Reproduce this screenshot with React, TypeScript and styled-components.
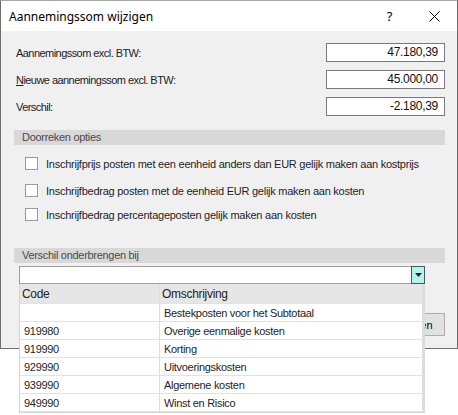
import React from "react";
import styled, { createGlobalStyle } from "styled-components";

const GlobalStyle = createGlobalStyle`
  html, body {
    margin: 0;
    padding: 0;
    background: #ffffff;
  }
  body {
    width: 458px;
    height: 415px;
    overflow: hidden;
  }
`;

const Page = styled.div`
  position: relative;
  width: 458px;
  height: 415px;
  background: #ffffff;
`;

const Window = styled.div`
  width: 458px;
  box-sizing: border-box;
  border: 1px solid #6e6e6e;
  border-top-color: #a8a8a8;
  display: flex;
  flex-direction: column;
  font-family: "Liberation Sans", Arial, sans-serif;
  font-size: 11px;
  color: #1e1e1e;
`;

const TitleBar = styled.div`
  height: 30px;
  background: #ffffff;
  display: flex;
  align-items: center;
`;

const Title = styled.div`
  flex: 1;
  padding-left: 8px;
  font-family: "Noto Sans", "Open Sans", sans-serif;
  font-size: 12px;
  color: #000000;
`;

const CaptionButton = styled.div`
  width: 45px;
  height: 30px;
  display: flex;
  align-items: center;
  justify-content: center;
  font-family: "Noto Sans", sans-serif;
  font-size: 13px;
  color: #000;
`;

const Body = styled.div`
  background: #f0f0f0;
  padding: 12px 12px 12px 13px;
  display: flex;
  flex-direction: column;
  position: relative;
`;

const FieldRow = styled.div<{ $top?: number }>`
  display: flex;
  align-items: center;
  height: 19px;
  margin-top: ${({ $top }) => $top ?? 0}px;
`;

const FieldLabel = styled.div`
  flex: 1;
  padding-left: 2px;
  color: #222;
  letter-spacing: -0.55px;
`;

const Mnemonic = styled.span`
  text-decoration: underline;
`;

const ValueBox = styled.div`
  width: 119px;
  height: 19px;
  box-sizing: border-box;
  border: 1px solid #7a7a7a;
  background: #ffffff;
  text-align: right;
  padding: 0 6px;
  line-height: 17px;
  font-size: 12px;
  letter-spacing: -0.3px;
  color: #111;
`;

const SectionBand = styled.div<{ $top: number }>`
  margin-top: ${({ $top }) => $top}px;
  height: 15px;
  background: #d8d8d8;
  padding-left: 8px;
  line-height: 15px;
  color: #4a4a4a;
  letter-spacing: -0.3px;
`;

const CheckRow = styled.label<{ $top: number }>`
  display: flex;
  align-items: center;
  gap: 8px;
  margin-top: ${({ $top }) => $top}px;
  margin-left: 11px;
  height: 13px;
  color: #1e1e1e;
  white-space: nowrap;
  letter-spacing: -0.25px;
`;

const CheckBox = styled.span`
  width: 13px;
  height: 13px;
  box-sizing: border-box;
  border: 1px solid #9a9a9a;
  background: #ffffff;
  flex: none;
`;

const ComboWrap = styled.div`
  position: relative;
  margin: 3px 0 0 5px;
  width: 406px;
`;

const Combo = styled.div`
  height: 18px;
  box-sizing: border-box;
  border: 1px solid #a0a0a0;
  background: #ffffff;
  display: flex;
  justify-content: flex-end;
`;

const ComboButton = styled.div`
  width: 14px;
  height: 18px;
  margin: -1px -1px 0 0;
  box-sizing: border-box;
  border: 1px solid #3d5c5c;
  background: #b6f3ec;
  display: flex;
  align-items: center;
  justify-content: center;
`;

const ButtonRow = styled.div`
  display: flex;
  justify-content: flex-end;
  gap: 6px;
  margin-top: 29px;
`;

const DialogButton = styled.div`
  width: 75px;
  height: 23px;
  box-sizing: border-box;
  border: 1px solid #adadad;
  background: #e1e1e1;
  display: flex;
  align-items: center;
  justify-content: center;
  color: #000;
`;

const DropList = styled.div`
  position: absolute;
  top: 18px;
  left: 0;
  width: 406px;
  background: #ffffff;
  border-left: 1px solid #d4d4d4;
  border-right: 2px solid #dcdcdc;
  border-bottom: 1px solid #d4d4d4;
  box-sizing: border-box;
  z-index: 2;
`;

const ListRow = styled.div<{ $head?: boolean }>`
  display: grid;
  grid-template-columns: 140px 1fr;
  height: ${({ $head }) => ($head ? 20 : 18)}px;
  background: ${({ $head }) => ($head ? "#e6e6e6" : "#ffffff")};
  border-bottom: 1px solid #e2e2e2;
  box-sizing: border-box;
`;

const Cell = styled.div<{ $head?: boolean }>`
  display: flex;
  align-items: center;
  padding-left: ${({ $head }) => ($head ? 2 : 4)}px;
  border-right: 1px solid #dedede;
  font-size: ${({ $head }) => ($head ? 12 : 11)}px;
  letter-spacing: -0.3px;
  color: #1e1e1e;
  white-space: nowrap;
  overflow: hidden;
`;

const rows = [
  { code: "", desc: "Bestekposten voor het Subtotaal" },
  { code: "919980", desc: "Overige eenmalige kosten" },
  { code: "919990", desc: "Korting" },
  { code: "929990", desc: "Uitvoeringskosten" },
  { code: "939990", desc: "Algemene kosten" },
  { code: "949990", desc: "Winst en Risico" },
];

const App: React.FC = () => {
  return (
    <Page>
      <GlobalStyle />
      <Window>
        <TitleBar>
          <Title>Aannemingssom wijzigen</Title>
          <CaptionButton>?</CaptionButton>
          <CaptionButton>
            <svg width="11" height="11" viewBox="0 0 11 11">
              <path d="M0.5 0.5 L10.5 10.5 M10.5 0.5 L0.5 10.5" stroke="#000" strokeWidth="1" />
            </svg>
          </CaptionButton>
        </TitleBar>
        <Body>
          <FieldRow>
            <FieldLabel>Aannemingssom excl. BTW:</FieldLabel>
            <ValueBox>47.180,39</ValueBox>
          </FieldRow>
          <FieldRow $top={8}>
            <FieldLabel>
              <Mnemonic>N</Mnemonic>ieuwe aannemingssom excl. BTW:
            </FieldLabel>
            <ValueBox>45.000,00</ValueBox>
          </FieldRow>
          <FieldRow $top={8}>
            <FieldLabel>Verschil:</FieldLabel>
            <ValueBox>-2.180,39</ValueBox>
          </FieldRow>

          <SectionBand $top={14}>Doorreken opties</SectionBand>
          <CheckRow $top={12}>
            <CheckBox />
            Inschrijfprijs posten met een eenheid anders dan EUR gelijk maken aan kostprijs
          </CheckRow>
          <CheckRow $top={14}>
            <CheckBox />
            Inschrijfbedrag posten met de eenheid EUR gelijk maken aan kosten
          </CheckRow>
          <CheckRow $top={11}>
            <CheckBox />
            Inschrijfbedrag percentageposten gelijk maken aan kosten
          </CheckRow>

          <SectionBand $top={27}>Verschil onderbrengen bij</SectionBand>
          <ComboWrap>
            <Combo>
              <ComboButton>
                <svg width="7" height="4" viewBox="0 0 7 4">
                  <path d="M0 0 H7 L3.5 4 Z" fill="#222" />
                </svg>
              </ComboButton>
            </Combo>
            <DropList>
              <ListRow $head>
                <Cell $head>Code</Cell>
                <Cell $head>Omschrijving</Cell>
              </ListRow>
              {rows.map((r) => (
                <ListRow key={r.desc}>
                  <Cell>{r.code}</Cell>
                  <Cell>{r.desc}</Cell>
                </ListRow>
              ))}
            </DropList>
          </ComboWrap>
          <ButtonRow>
            <DialogButton>OK</DialogButton>
            <DialogButton>Annuleren</DialogButton>
          </ButtonRow>
        </Body>
      </Window>
    </Page>
  );
};

export default App;
